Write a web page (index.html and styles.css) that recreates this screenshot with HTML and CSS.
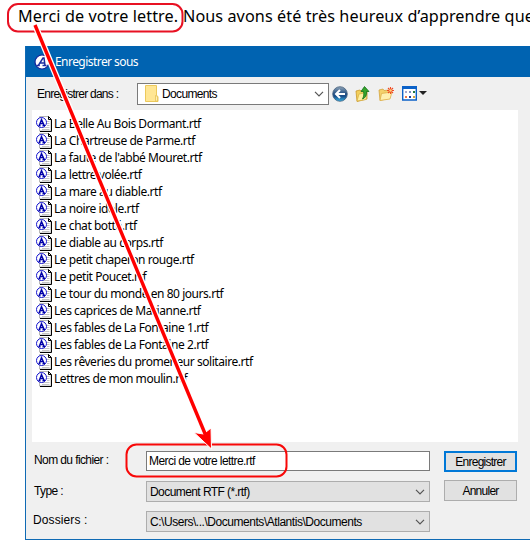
FILE: index.html
```html
<!DOCTYPE html>
<html lang="fr">
<head>
    <meta charset="UTF-8">
    <title>Enregistrer sous</title>
    <link rel="stylesheet" href="styles.css">
</head>
<body>
    <svg class="sprite" width="0" height="0">
        <symbol id="file" viewBox="0 0 16 16">
            <path d="M3.5 .5h9l2.500 3v11.500h-11.500z" fill="#fff" stroke="#b8b8b8"/>
            <path d="M12.500 .5v3h2.500M4 15.500h11.500V3.500L12.500 .5" fill="none" stroke="#000"/>
            <path d="M11 5.500h2.500M11 7.500h2.500M11 9.500h2.500M6 11.500h7.500M6 13.500h7.500" stroke="#c4c4c4"/>
            <circle cx="5.500" cy="6.500" r="5" fill="#fff" stroke="#1414d0"/>
            <path d="M2.500 9.500h2M6.500 9.500h2.500M3.500 9l2-5.500L8 9M4.300 7.500h3" fill="none" stroke="#0000a8" stroke-width="1.400"/>
        </symbol>
        <symbol id="chevron" viewBox="0 0 10 6">
            <path d="M1 .8l4 4 4-4" fill="none" stroke="#555" stroke-width="1.200"/>
        </symbol>
    </svg>

    <div class="page">
        <p class="letter"><span class="first">Merci de votre lettre.</span><span class="rest">Nous avons été très heureux d’apprendre que</span></p>

        <div class="dialog">
            <div class="titlebar">
                <svg class="app-icon" width="16" height="16" viewBox="0 0 16 16">
                    <circle cx="8" cy="8" r="7" fill="#fff" stroke="#10249c" stroke-width="1.200"/>
                    <path d="M2.800 11.500h3M8.500 11.500h4M4.500 11.200L9 4h1l1 7.500M6 9h4.500" fill="none" stroke="#1a2ca0" stroke-width="1.500"/>
                </svg>
                <span>Enregistrer sous</span>
            </div>

            <div class="toolbar">
                <span class="toolbar-label">Enregistrer dans :</span>
                <div class="lookin">
                    <svg width="14" height="17" viewBox="0 0 14 17">
                        <path d="M.5 .5h11v10l1.500 1v5H.5z" fill="#ffe694" stroke="#ecc95c"/>
                        <path d="M10.500 16v-5.500l2 1V16z" fill="#fff0b5" stroke="#e4bd4d" stroke-width=".7"/>
                    </svg>
                    <span>Documents</span>
                    <svg class="chevron" width="10" height="6"><use href="#chevron"/></svg>
                </div>
                <svg class="tool-back" width="16" height="16" viewBox="0 0 16 16">
                    <defs><linearGradient id="ball" x1="0" y1="0" x2="0" y2="1"><stop offset="0" stop-color="#91a5b8"/><stop offset=".45" stop-color="#285487"/><stop offset=".65" stop-color="#174b87"/><stop offset="1" stop-color="#35b4e8"/></linearGradient></defs>
                    <circle cx="8" cy="8" r="7.300" fill="url(#ball)" stroke="#46617c" stroke-width=".8"/>
                    <path d="M13 8H4.500M8 4L4 8l4 4" fill="none" stroke="#fff" stroke-width="2"/>
                </svg>
                <svg class="tool-up" width="15" height="16" viewBox="0 0 15 16">
                    <path d="M1 5l4-1 1 1 6-1v9l-10 2.500z" fill="#f2cf5c" stroke="#c9982b" stroke-width=".8"/>
                    <path d="M2 15l2-7 8-1.500-1 7z" fill="#fff0a0" stroke="#d8ae42" stroke-width=".7"/>
                    <path d="M9.500 .5l4.500 5h-2.500c.3 4-.8 6-4 7.500C9 10 9 8 8.500 5.500H6z" fill="#35a52b" stroke="#14701a" stroke-width=".8"/>
                </svg>
                <svg class="tool-new" width="16" height="16" viewBox="0 0 16 16">
                    <path d="M1 4l4-1 1 1.500 6-.5v8L2 14.500z" fill="#f4d16b" stroke="#d4a440" stroke-width=".8"/>
                    <path d="M2 14.500l1.500-7L14 6l-2 7z" fill="#fff0b0" stroke="#deb14b" stroke-width=".8"/>
                    <path d="M12.500 1v7M9 4.500h7M10 2l5 5M15 2l-5 5" stroke="#f04a24" stroke-width="1.100"/>
                    <circle cx="12.500" cy="4.500" r="1.300" fill="#ffd080"/>
                </svg>
                <svg class="tool-view" width="25" height="15" viewBox="0 0 25 15">
                    <path d="M.7 1h13.600v13H.7z" fill="#fff" stroke="#0c62c8" stroke-width="1.400"/>
                    <path d="M0 0h15v3H0z" fill="#0c62c8"/>
                    <path d="M3 5h2v2H3z" fill="#aaa6c8"/><path d="M7 5h2v2H7z" fill="#7a91c4"/><path d="M11 5h2v2h-2z" fill="#247a3d"/>
                    <path d="M3 10h2v2H3z" fill="#ef7842"/><path d="M7 10h2v2H7z" fill="#173c9c"/><path d="M11 10h2v2h-2z" fill="#d7a438"/>
                    <path d="M17 5h8l-4 4z" fill="#222"/>
                </svg>
            </div>

            <ul class="files">
                <li><svg><use href="#file"/></svg>La Belle Au Bois Dormant.rtf</li>
                <li><svg><use href="#file"/></svg>La Chartreuse de Parme.rtf</li>
                <li><svg><use href="#file"/></svg>La faute de l'abbé Mouret.rtf</li>
                <li><svg><use href="#file"/></svg>La lettre volée.rtf</li>
                <li><svg><use href="#file"/></svg>La mare au diable.rtf</li>
                <li><svg><use href="#file"/></svg>La noire idole.rtf</li>
                <li><svg><use href="#file"/></svg>Le chat botté.rtf</li>
                <li><svg><use href="#file"/></svg>Le diable au corps.rtf</li>
                <li><svg><use href="#file"/></svg>Le petit chaperon rouge.rtf</li>
                <li><svg><use href="#file"/></svg>Le petit Poucet.rtf</li>
                <li><svg><use href="#file"/></svg>Le tour du monde en 80 jours.rtf</li>
                <li><svg><use href="#file"/></svg>Les caprices de Marianne.rtf</li>
                <li><svg><use href="#file"/></svg>Les fables de La Fontaine 1.rtf</li>
                <li><svg><use href="#file"/></svg>Les fables de La Fontaine 2.rtf</li>
                <li><svg><use href="#file"/></svg>Les rêveries du promeneur solitaire.rtf</li>
                <li><svg><use href="#file"/></svg>Lettres de mon moulin.rtf</li>
            </ul>

            <div class="bottom">
                <div class="labels">
                    <span class="label-name">Nom du fichier :</span>
                    <span class="label-type">Type :</span>
                    <span class="label-folders">Dossiers :</span>
                </div>
                <div class="fields">
                    <div class="field name">Merci de votre lettre.rtf</div>
                    <div class="field select type"><span>Document RTF (*.rtf)</span><svg width="10" height="6"><use href="#chevron"/></svg></div>
                    <div class="field select folders"><span>C:\Users\...\Documents\Atlantis\Documents</span><svg width="10" height="6"><use href="#chevron"/></svg></div>
                </div>
                <div class="buttons">
                    <button class="default">Enregistrer</button>
                    <button>Annuler</button>
                </div>
            </div>
        </div>

        <!-- red callouts and arrow -->
        <svg class="callout" width="530" height="543" viewBox="0 0 530 543">
            <rect x="8" y="4" width="174.500" height="27.500" rx="10" fill="none" stroke="#e81123" stroke-width="2"/>
            <rect x="126.500" y="444.500" width="160" height="32" rx="10" fill="none" stroke="#f80808" stroke-width="2"/>
            <path d="M35 25L206 435" stroke="#fff" stroke-width="6"/>
            <path d="M211.500 449L194 432.500l9.500 1.500 7.500-6z" fill="#f00" stroke="#fff" stroke-width="1"/>
            <path d="M35 25L206 436" stroke="#f00" stroke-width="3.400"/>
        </svg>
    </div>
</body>
</html>
```

FILE: styles.css
```css
* {
    margin: 0;
    padding: 0;
    box-sizing: border-box;
}

body {
    background: #fff;
    color: #000;
    font-family: "Liberation Sans", Arial, sans-serif;
    font-size: 12px;
    overflow: hidden;
}

svg {
    display: block;
    flex-shrink: 0;
}

.sprite {
    position: absolute;
}

.page {
    position: relative;
    width: 530px;
    height: 543px;
    overflow: hidden;
}

.letter {
    display: flex;
    height: 46px;
    padding: 4px 0 0 18px;
    font-family: "Noto Sans", "Segoe UI", sans-serif;
    font-size: 16.2px;
    line-height: 24px;
    white-space: nowrap;
}

.letter .first {
    flex-shrink: 0;
    width: 165px;
    letter-spacing: 0.1px;
}

.letter .rest {
    letter-spacing: 0.08px;
}

.dialog {
    width: 520px;
    height: 494px;
    margin-left: 25px;
    border-left: 1px solid #0f6ab4;
    border-bottom: 1px solid #0f6ab4;
    background: #f0f0f0;
    white-space: nowrap;
}

.titlebar {
    display: flex;
    align-items: center;
    gap: 5px;
    height: 31px;
    padding-left: 8px;
    background: #0063b1;
    color: #fff;
    font-family: "Noto Sans", "Segoe UI", sans-serif;
    font-size: 12px;
    letter-spacing: -0.55px;
}

.toolbar {
    display: flex;
    align-items: center;
    height: 33px;
    padding-left: 11px;
}

.toolbar-label {
    width: 100px;
    letter-spacing: -0.75px;
}

.lookin {
    display: flex;
    align-items: center;
    width: 192px;
    height: 22px;
    padding: 0 4px 0 7px;
    border: 1px solid #7a7a7a;
    background: #fff;
}

.lookin span {
    margin-left: 3px;
    letter-spacing: -0.65px;
}

.chevron {
    margin-left: auto;
}

.tool-back {
    margin-left: 3px;
}

.tool-up {
    margin-left: 7px;
}

.tool-new {
    margin-left: 8px;
}

.tool-view {
    margin-left: 8px;
}

.files {
    width: 486px;
    height: 332px;
    margin-left: 6px;
    padding: 5px 0 0 4px;
    background: #fff;
    list-style: none;
    font-family: "Noto Sans", "Segoe UI", sans-serif;
    font-size: 12px;
    letter-spacing: -0.45px;
}

.files li {
    display: flex;
    align-items: center;
    gap: 2px;
    height: 17px;
    line-height: 17px;
}

.files svg {
    width: 16px;
    height: 16px;
}

.bottom {
    display: flex;
    padding: 9px 0 0 8px;
}

.labels {
    display: flex;
    flex-direction: column;
    width: 112px;
    padding-top: 2px;
    line-height: 15px;
    letter-spacing: -0.6px;
}

.label-type {
    margin-top: 16px;
}

.label-folders {
    margin: 14px 0 0 -1px;
    letter-spacing: 0.1px;
}

.fields {
    width: 284px;
}

.field {
    display: flex;
    align-items: center;
    height: 20px;
    padding-left: 2px;
    border: 1px solid #7a7a7a;
    background: #fff;
    letter-spacing: -0.57px;
}

.select {
    justify-content: space-between;
    height: 21px;
    margin-top: 10px;
    padding: 0 4px 0 3px;
    border-color: #adadad;
    background: #e1e1e1;
}

.folders {
    margin-top: 9px;
    letter-spacing: -0.46px;
}

.buttons {
    display: flex;
    flex-direction: column;
    gap: 8px;
    margin-left: 14px;
}

button {
    width: 73px;
    height: 21px;
    border: 1px solid #adadad;
    background: #e1e1e1;
    color: #000;
    font: inherit;
    letter-spacing: -0.75px;
}

.default {
    border: 2px solid #0078d7;
}

.callout {
    position: absolute;
    top: 0;
    left: 0;
}
```
